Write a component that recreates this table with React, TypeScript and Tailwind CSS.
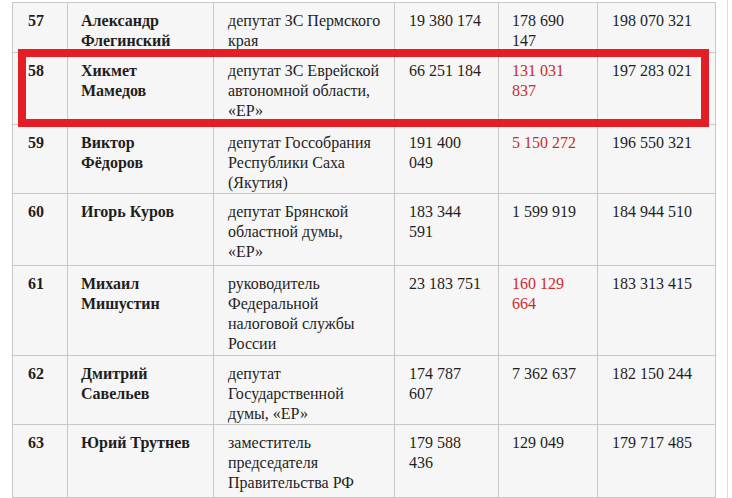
import React from "react";

type Row = {
  n: string;
  name: string[];
  pos: string[];
  a: string[];
  b: string[];
  bRed?: boolean;
  c: string[];
  h: string;
};

const rows: Row[] = [
  { n: "57", name: ["Александр", "Флегинский"], pos: ["депутат ЗС Пермского", "края"], a: ["19 380 174"], b: ["178 690", "147"], c: ["198 070 321"], h: "h-[50px]" },
  { n: "58", name: ["Хикмет", "Мамедов"], pos: ["депутат ЗС Еврейской", "автономной области,", "«ЕР»"], a: ["66 251 184"], b: ["131 031", "837"], bRed: true, c: ["197 283 021"], h: "h-[72px]" },
  { n: "59", name: ["Виктор", "Фёдоров"], pos: ["депутат Госсобрания", "Республики Саха", "(Якутия)"], a: ["191 400", "049"], b: ["5 150 272"], bRed: true, c: ["196 550 321"], h: "h-[69px]" },
  { n: "60", name: ["Игорь Куров"], pos: ["депутат Брянской", "областной думы,", "«ЕР»"], a: ["183 344", "591"], b: ["1 599 919"], c: ["184 944 510"], h: "h-[72px]" },
  { n: "61", name: ["Михаил", "Мишустин"], pos: ["руководитель", "Федеральной", "налоговой службы", "России"], a: ["23 183 751"], b: ["160 129", "664"], bRed: true, c: ["183 313 415"], h: "h-[90px]" },
  { n: "62", name: ["Дмитрий", "Савельев"], pos: ["депутат", "Государственной", "думы, «ЕР»"], a: ["174 787", "607"], b: ["7 362 637"], c: ["182 150 244"], h: "h-[69px]" },
  { n: "63", name: ["Юрий Трутнев"], pos: ["заместитель", "председателя", "Правительства РФ"], a: ["179 588", "436"], b: ["129 049"], c: ["179 717 485"], h: "h-[73px]" },
];

function Lines({ lines }: { lines: string[] }) {
  return (
    <>
      {lines.map((l, i) => (
        <div key={i} className="whitespace-nowrap">
          {l}
        </div>
      ))}
    </>
  );
}

const cell = "border-r border-b border-[#c8c8c8] bg-[#f6f6f6] pt-[8px] leading-[20px]";

export default function App() {
  return (
    <div
      className="relative w-[732px] h-[498px] overflow-hidden bg-white text-[16px] text-[#1e1e1e]"
      style={{ fontFamily: '"Liberation Serif", "Times New Roman", serif' }}
    >
      <div className="flex pt-[2px]">
        <div className="w-[12px] shrink-0" />
        <div className="grid grid-cols-[55px_146px_181px_104px_99px_118px] border-l border-t border-[#c8c8c8] self-start">
          {rows.map((r) => (
            <React.Fragment key={r.n}>
              <div className={`${cell} ${r.h} pl-[15px] font-bold`}>{r.n}</div>
              <div className={`${cell} ${r.h} pl-[13px] font-bold`}>
                <Lines lines={r.name} />
              </div>
              <div className={`${cell} ${r.h} pl-[14px]`}>
                <Lines lines={r.pos} />
              </div>
              <div className={`${cell} ${r.h} pl-[14px]`}>
                <Lines lines={r.a} />
              </div>
              <div className={`${cell} ${r.h} pl-[13px] ${r.bRed ? "text-[#cc2a2a]" : ""}`}>
                <Lines lines={r.b} />
              </div>
              <div className={`${cell} ${r.h} pl-[14px]`}>
                <Lines lines={r.c} />
              </div>
            </React.Fragment>
          ))}
        </div>
        <div className="w-[11px] shrink-0" />
        <div className="w-px h-[498px] -mt-[2px] bg-[#dcdcdc] shrink-0" />
      </div>
      <div className="absolute left-[18px] top-[49px] w-[691px] h-[78px] border-[8px] border-[#e31e25]" />
    </div>
  );
}
